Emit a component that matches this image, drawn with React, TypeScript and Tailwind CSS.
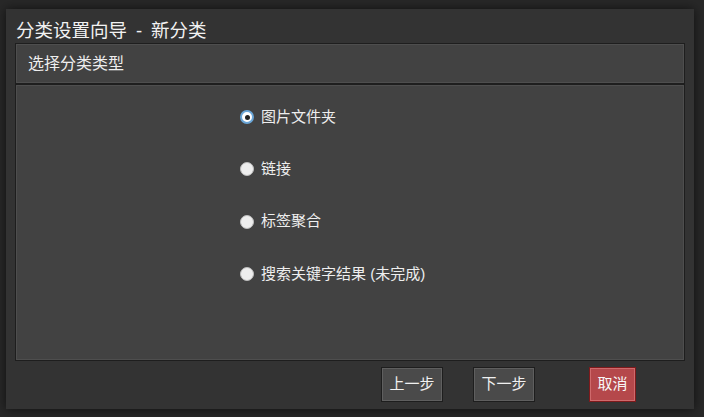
import React, { useState } from "react";

const options = ["图片文件夹", "链接", "标签聚合", "搜索关键字结果 (未完成)"];

export default function App() {
  const [sel, setSel] = useState(0);
  return (
    <div
      className="w-[704px] h-[417px] bg-[#282828] pt-[9px] pl-[6px]"
      style={{ fontFamily: '"Liberation Sans", "Noto Sans CJK SC", sans-serif' }}
    >
      <div className="w-[688px] h-[400px] bg-[#333333] shadow-[0_0_10px_rgba(0,0,0,0.6)] flex flex-col px-[9px]">
        <div className="h-[34px] flex items-end pb-[1px] pl-[1px] text-[18.5px] leading-[22px] text-[#f2f2f2]">
          <span>分类设置向导</span>
          <span className="inline-block w-[24px] text-center">-</span>
          <span>新分类</span>
        </div>
        <div className="h-[41px] border border-[#1e1e1e] bg-[#424242] shadow-[inset_1px_1px_0_#4e4e4e,inset_-1px_-1px_0_#4e4e4e] flex items-center pl-[12px] text-[16px] text-[#eeeeee]">
          选择分类类型
        </div>
        <div className="h-[277px] border border-[#1e1e1e] bg-[#424242] shadow-[inset_1px_1px_0_#4e4e4e,inset_-1px_-1px_0_#4e4e4e] pt-[23px] pl-[224px] flex flex-col gap-[34.33px]">
          {options.map((o, i) => (
            <label key={o} className="flex items-center gap-[7px] h-[18px] text-[15px] text-[#eeeeee] cursor-pointer" onClick={() => setSel(i)}>
              <span
                className={
                  "w-[14px] h-[14px] rounded-full flex items-center justify-center shrink-0 " +
                  (sel === i
                    ? "bg-white border-[2px] border-[#6aa6d8]"
                    : "bg-[#eeeeee] border border-[#bdbdbd]")
                }
              >
                {sel === i && <span className="w-[5px] h-[5px] rounded-full bg-[#222]" />}
              </span>
              {o}
            </label>
          ))}
        </div>
        <div className="flex pt-[6px] pl-[366px]">
          <button className="w-[62px] h-[35px] bg-[#4a4a4a] border border-[#1e1e1e] shadow-[inset_0_0_0_1px_#5f5f5f] text-[15px] text-[#f0f0f0]">
            上一步
          </button>
          <button className="ml-[30px] w-[62px] h-[35px] bg-[#4a4a4a] border border-[#1e1e1e] shadow-[inset_0_0_0_1px_#5f5f5f] text-[15px] text-[#f0f0f0]">
            下一步
          </button>
          <button className="ml-[54px] w-[47px] h-[35px] bg-[#b5484b] border border-[#7e1a1c] shadow-[inset_0_0_0_1px_#cf6a6c] text-[15px] text-[#f7f7f7]">
            取消
          </button>
        </div>
      </div>
    </div>
  );
}
